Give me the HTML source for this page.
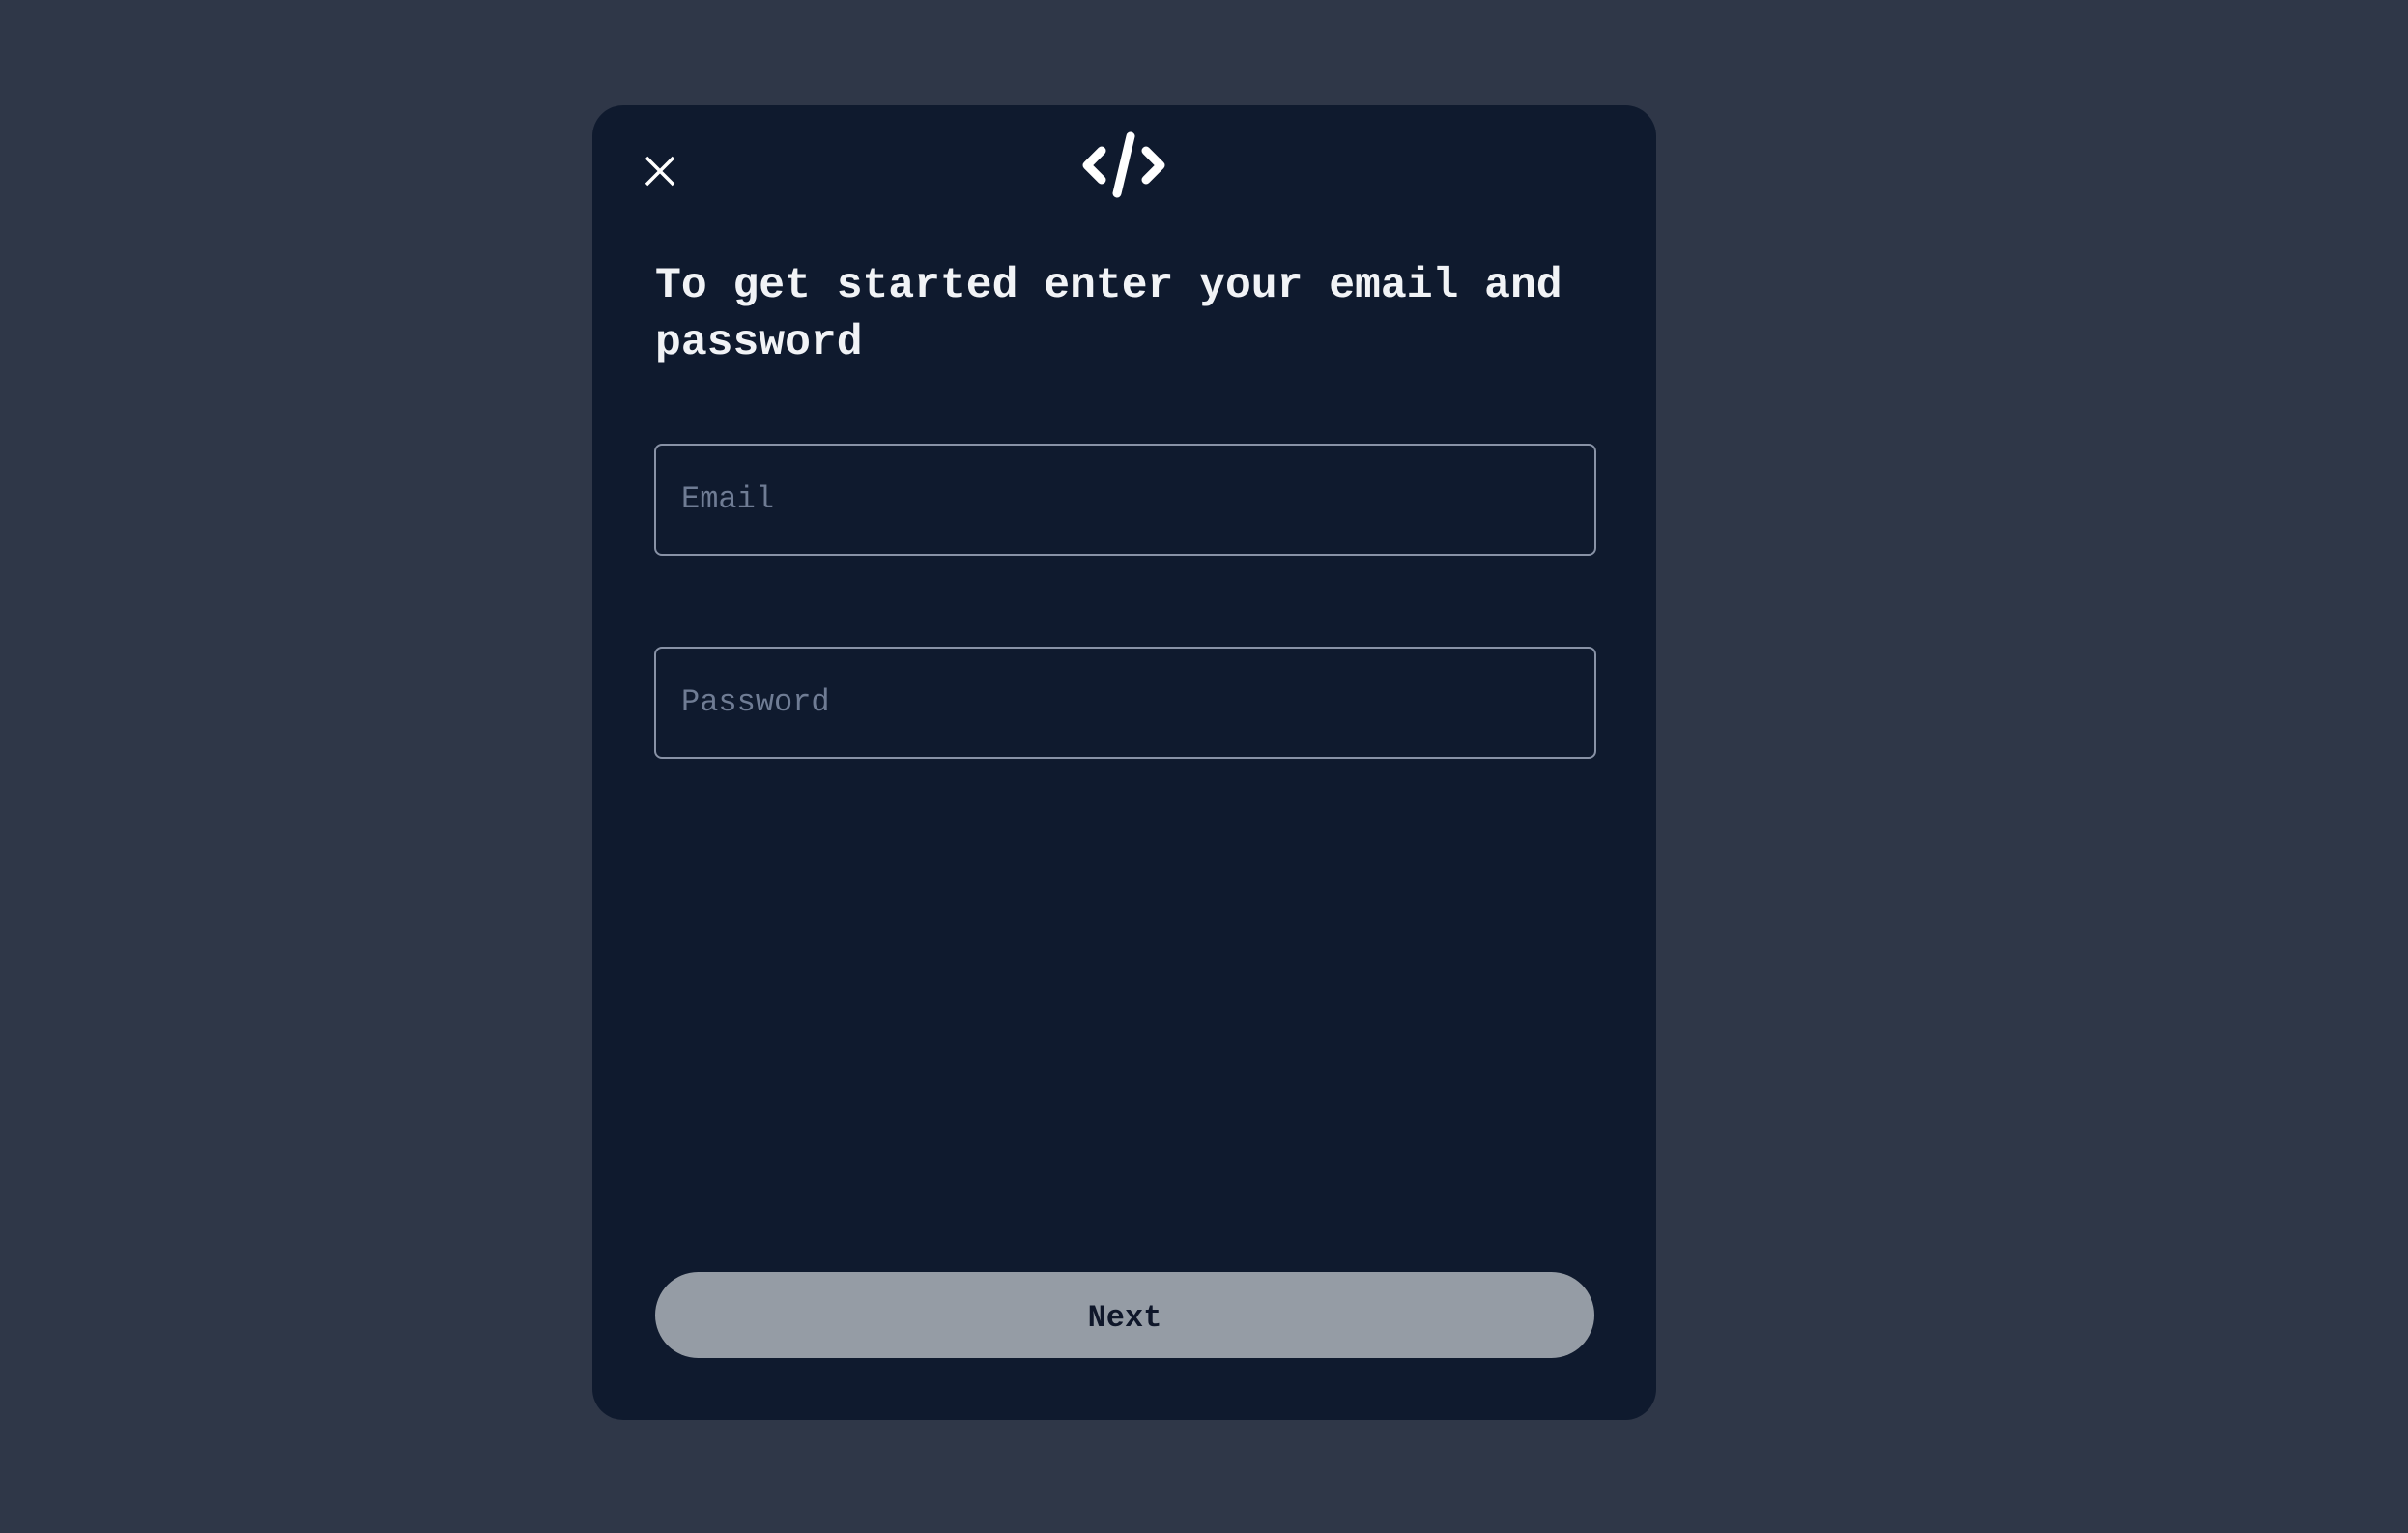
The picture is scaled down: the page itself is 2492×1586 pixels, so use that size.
<!DOCTYPE html>
<html><head><meta charset="utf-8"><style>
html,body{margin:0;padding:0;width:2492px;height:1586px;background:#2f3748;overflow:hidden}
.card{position:absolute;left:613px;top:109px;width:1101px;height:1360px;background:#0f1a2e;border-radius:32px}
.mono{font-family:"Liberation Mono",monospace}
h1{position:absolute;left:678px;top:267px;margin:0;width:1000px;font-size:44.7px;line-height:59px;font-weight:bold;color:#f1f3f6}
.inp{position:absolute;left:677px;width:975px;height:116px;border:2px solid #8892a6;border-radius:8px;box-sizing:border-box}
.inp span{position:absolute;left:26px;top:0;line-height:112px;font-size:32px;color:#6f7c94}
.btn{position:absolute;left:678px;top:1316px;width:972px;height:89px;border-radius:45px;background:#959ca5;text-align:center;line-height:95px;font-size:32px;font-weight:bold;color:#0f172a}
</style></head><body>
<div class="card"></div>
<svg style="position:absolute;left:666px;top:160px" width="34" height="34" viewBox="0 0 34 34"><path d="M3 3L31 31M31 3L3 31" stroke="#fff" stroke-width="3.5" fill="none"/></svg>
<svg style="position:absolute;left:1118px;top:136px" width="90" height="70" viewBox="0 0 90 70"><g stroke="#fff" stroke-width="9" stroke-linecap="round" stroke-linejoin="round" fill="none"><path d="M22 20L7 35L22 50"/><path d="M68 20L83 35L68 50"/><path d="M52 5L38 64"/></g></svg>
<h1 class="mono">To get started enter your email and password</h1>
<div class="inp mono" style="top:459px"><span>Email</span></div>
<div class="inp mono" style="top:669px"><span>Password</span></div>
<div class="btn mono">Next</div>
</body></html>
